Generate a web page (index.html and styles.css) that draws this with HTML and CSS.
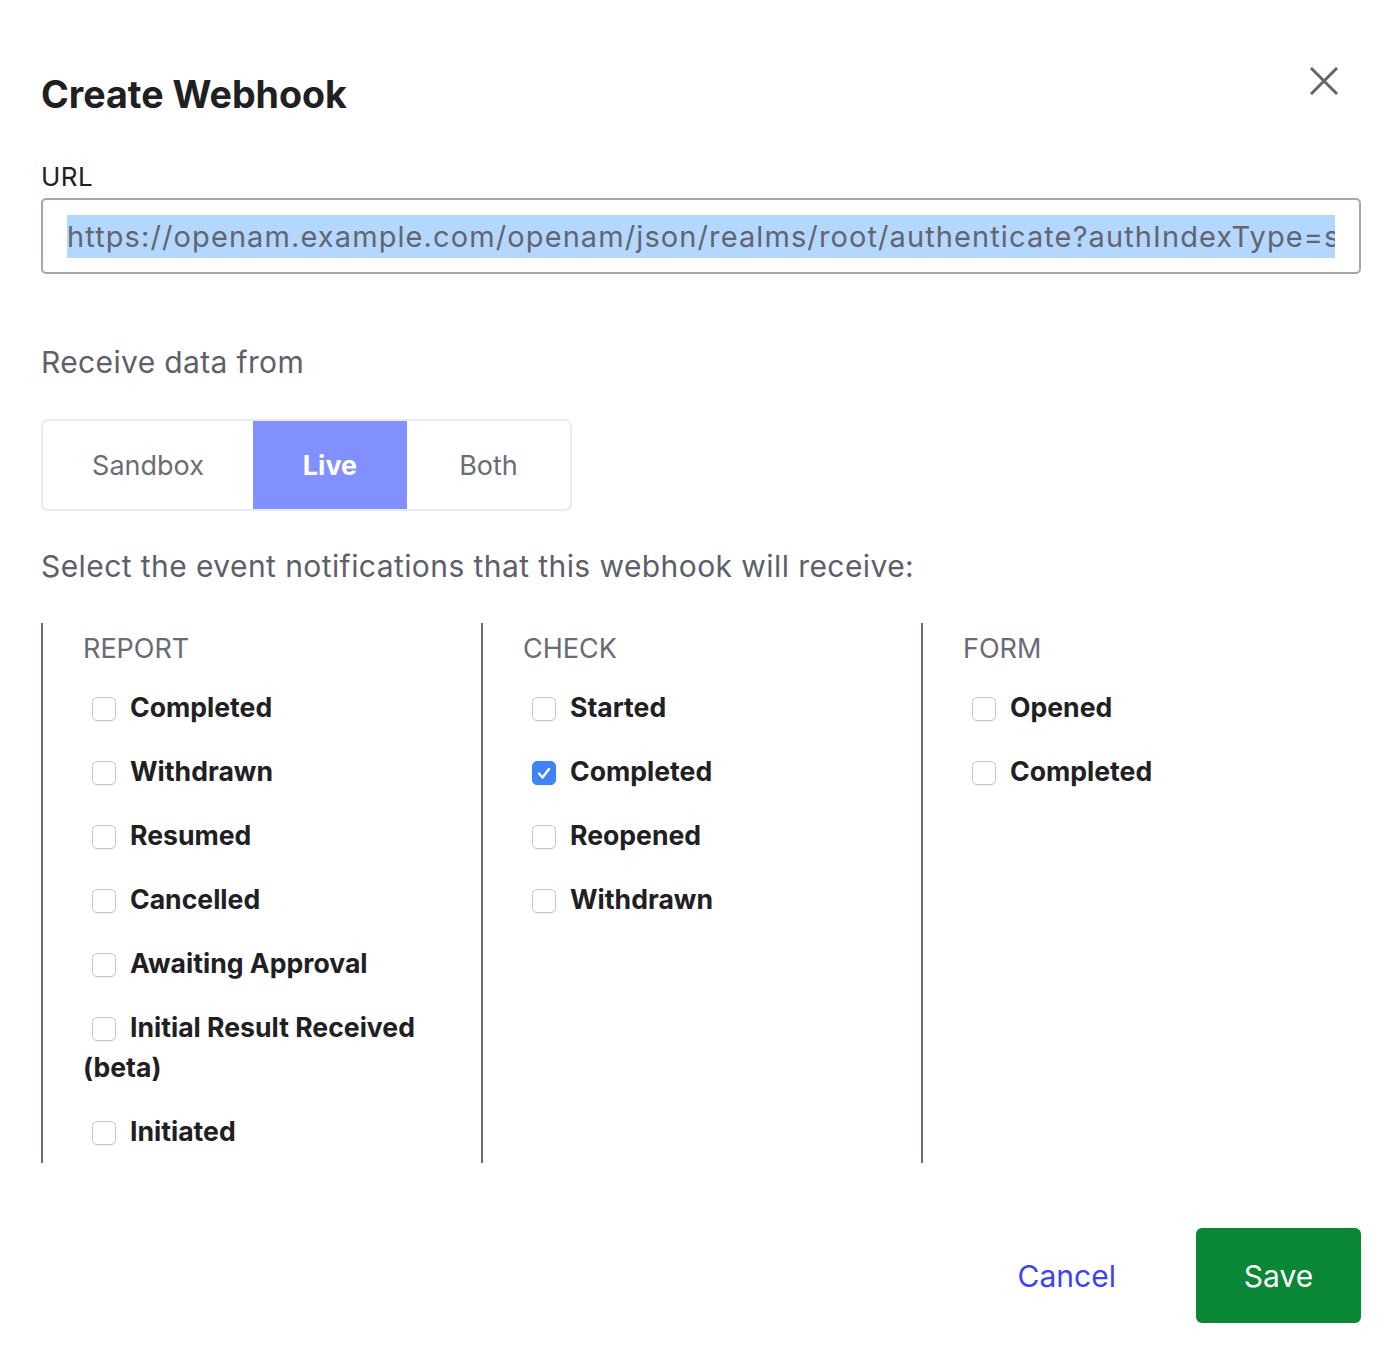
FILE: index.html
```html
<!DOCTYPE html>
<html lang="en">
<head>
<meta charset="utf-8">
<title>Create Webhook</title>
<link rel="stylesheet" href="styles.css">
</head>
<body>
<div class="modal">
  <div class="modal-header">
    <h1 class="title">Create Webhook</h1>
    <button class="close" aria-label="Close">
      <svg width="28" height="28" viewBox="0 0 28 28"><path d="M2 2 L26 26 M26 2 L2 26" stroke="#63656d" stroke-width="3" stroke-linecap="square" fill="none"/></svg>
    </button>
  </div>

  <label class="field-label">URL</label>
  <div class="input">
    <div class="input-inner"><span class="selected">https://openam.example.com/openam/json/realms/root/authenticate?authIndexType=service&amp;authIndexValue=webhook</span></div>
  </div>

  <p class="section-label">Receive data from</p>

  <div class="segmented">
    <div class="seg">Sandbox</div>
    <div class="seg active">Live</div>
    <div class="seg">Both</div>
  </div>

  <p class="select-label">Select the event notifications that this webhook will receive:</p>

  <div class="columns">
    <div class="col">
      <div class="col-head">REPORT</div>
      <label class="item"><span class="cb"></span>Completed</label>
      <label class="item"><span class="cb"></span>Withdrawn</label>
      <label class="item"><span class="cb"></span>Resumed</label>
      <label class="item"><span class="cb"></span>Cancelled</label>
      <label class="item"><span class="cb"></span>Awaiting Approval</label>
      <label class="item"><span class="cb"></span>Initial Result Received (beta)</label>
      <label class="item"><span class="cb"></span>Initiated</label>
    </div>
    <div class="col">
      <div class="col-head">CHECK</div>
      <label class="item"><span class="cb"></span>Started</label>
      <label class="item"><span class="cb checked"><svg width="24" height="24" viewBox="0 0 24 24"><path d="M7 12.5 L10.5 16.5 L17 8" stroke="#fff" stroke-width="2.4" fill="none" stroke-linecap="round" stroke-linejoin="round"/></svg></span>Completed</label>
      <label class="item"><span class="cb"></span>Reopened</label>
      <label class="item"><span class="cb"></span>Withdrawn</label>
    </div>
    <div class="col">
      <div class="col-head">FORM</div>
      <label class="item"><span class="cb"></span>Opened</label>
      <label class="item"><span class="cb"></span>Completed</label>
    </div>
  </div>

  <div class="actions">
    <button class="btn-cancel">Cancel</button>
    <button class="btn-save">Save</button>
  </div>
</div>
</body>
</html>
```

FILE: styles.css
```css
* { box-sizing: border-box; }
html, body { margin: 0; padding: 0; background: #fff; }
body {
  font-family: Inter, "Noto Sans", "Liberation Sans", sans-serif;
  color: #1f2024;
}
.modal {
  padding: 0 25px 0 41px;
}
.modal-header {
  display: flex;
  justify-content: space-between;
  align-items: flex-start;
}
.title {
  margin: 73px 0 0 0;
  font-size: 37.6px;
  line-height: 44px;
  font-weight: 700;
  color: #1f2024;
}
.close {
  margin: 67px 23px 0 0;
  padding: 0;
  border: 0;
  background: transparent;
  width: 28px;
  height: 28px;
  display: flex;
}
.field-label {
  display: block;
  margin-top: 46px;
  font-size: 26px;
  line-height: 28px;
  letter-spacing: 0.4px;
  color: #1f2024;
}
.input {
  margin-top: 7px;
  height: 76px;
  border: 2px solid #a3a6b0;
  border-radius: 5px;
  padding: 15px 24px 0 24px;
}
.input-inner {
  overflow: hidden;
  white-space: nowrap;
}
.selected {
  background: #b3d7ff;
  font-size: 29px;
  letter-spacing: 1.1px;
  line-height: 43px;
  color: #63656e;
  display: inline-block;
}
.section-label {
  margin: 70px 0 0 0;
  font-size: 30px;
  line-height: 36px;
  letter-spacing: 0.35px;
  color: #5d606a;
}
.segmented {
  margin-top: 39px;
  display: inline-flex;
  border: 2px solid #e8ebf0;
  border-radius: 7px;
  height: 92px;
  overflow: hidden;
}
.seg {
  display: flex;
  align-items: center;
  justify-content: center;
  font-size: 27px;
  color: #6b6d75;
}
.seg:nth-child(1) { width: 210px; }
.seg:nth-child(2) { width: 154px; }
.seg:nth-child(3) { width: 163px; }
.seg.active {
  background: #8290ff;
  color: #fff;
  font-weight: 700;
  height: calc(100% + 4px);
  margin-top: -2px;
}
.select-label {
  margin: 37px 0 0 0;
  font-size: 30px;
  line-height: 36px;
  letter-spacing: 0.42px;
  color: #5d606a;
}
.columns {
  margin-top: 39px;
  display: grid;
  grid-template-columns: repeat(3, 1fr);
}
.col {
  border-left: 2px solid #6b6e78;
  padding: 8px 20px 12px 40px;
  height: 540px;
}
.col-head {
  font-size: 27px;
  line-height: 36px;
  color: #686b75;
  margin-bottom: 20px;
}
.item {
  display: block;
  font-size: 26.6px;
  line-height: 40px;
  font-weight: 700;
  color: #1f2024;
  margin-bottom: 24px;
}
.cb {
  display: inline-block;
  vertical-align: -4px;
  width: 24px;
  height: 24px;
  margin: 0 14px 0 9px;
  border: 1px solid #c4c6cc;
  border-radius: 5px;
  background: #fff;
  box-shadow: 0 1px 1px rgba(0,0,0,0.06);
}
.cb.checked {
  background: #3d85f6;
  border-color: #3d85f6;
  position: relative;
}
.cb.checked svg {
  position: absolute;
  left: -1px;
  top: -1px;
}
.actions {
  display: flex;
  justify-content: flex-end;
  align-items: center;
  margin-top: 65px;
  gap: 40px;
}
.btn-cancel {
  background: transparent;
  border: 0;
  font-family: inherit;
  font-size: 30px;
  color: #3b45f5;
  padding: 0 40px;
  height: 95px;
}
.btn-save {
  background: #0a8734;
  border: 0;
  border-radius: 6px;
  font-family: inherit;
  font-size: 30px;
  color: #fff;
  width: 165px;
  height: 95px;
}
```
